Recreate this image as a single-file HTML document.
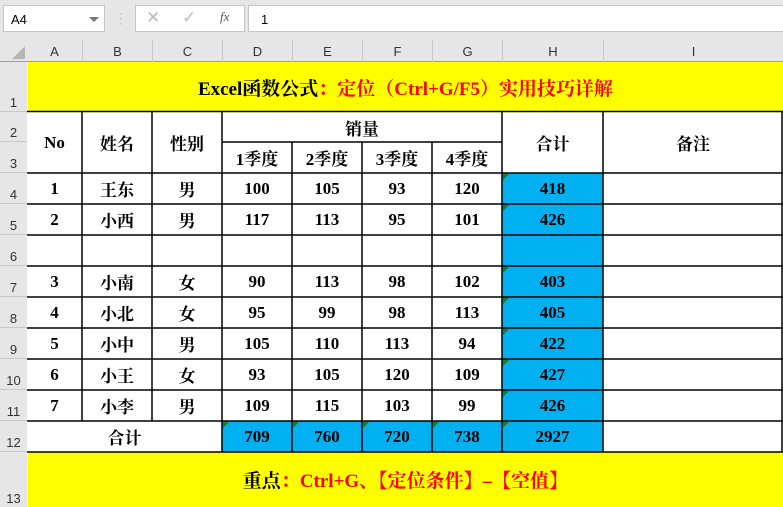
<!DOCTYPE html><html><head><meta charset="utf-8"><style>
*{margin:0;padding:0;box-sizing:border-box}
body{width:783px;height:507px;overflow:hidden;background:#fff;position:relative;font-family:"Liberation Serif","Noto Serif CJK SC",serif}
.a{position:absolute}
.c{position:absolute;display:flex;align-items:center;justify-content:center;font-weight:bold;font-size:17px;color:#000}
.hd{position:absolute;font-family:"Liberation Sans",sans-serif;font-size:13px;color:#333;display:flex;align-items:center;justify-content:center}
.rh{position:absolute;left:0;width:27px;font-family:"Liberation Sans",sans-serif;font-size:13px;color:#333;display:flex;align-items:flex-end;justify-content:center;background:#e6e6e6;border-bottom:1px solid #c8c8c8;padding-bottom:1px}
.b{background:#00b0f0}
.r{color:#f00}
.tri{position:absolute;width:0;height:0;border-top:6px solid #207a20;border-right:6px solid transparent}
</style></head><body>
<div class="a" style="left:0;top:0;width:783px;height:40px;background:#e6e6e6"></div>
<div class="a" style="left:3px;top:5px;width:102px;height:27px;background:#fff;border:1px solid #c6c6c6;font-family:'Liberation Sans',sans-serif;font-size:13px;padding:6px 0 0 7px">A4</div>
<div class="a" style="left:89px;top:17px;border-left:5px solid transparent;border-right:5px solid transparent;border-top:5px solid #777"></div>
<div class="a" style="left:119px;top:12px;color:#aaa;font-size:11px;line-height:5px;font-family:'Liberation Sans'">·<br>·<br>·</div>
<div class="a" style="left:135px;top:5px;width:110px;height:27px;background:#fff;border:1px solid #c6c6c6"></div>
<div class="a" style="left:146px;top:8px;color:#bbb;font-size:17px;font-family:'DejaVu Sans'">✕</div>
<div class="a" style="left:182px;top:8px;color:#bbb;font-size:17px;font-family:'DejaVu Sans'">✓</div>
<div class="a" style="left:220px;top:9px;color:#555;font-size:13px;font-style:italic">fx</div>
<div class="a" style="left:248px;top:5px;width:540px;height:27px;background:#fff;border:1px solid #c6c6c6;font-family:'Liberation Sans',sans-serif;font-size:13px;padding:6px 0 0 12px">1</div>
<div class="a" style="left:0;top:40px;width:783px;height:22px;background:#e6e6e6;border-bottom:1px solid #a0a0a0"></div>
<div class="a" style="left:12px;top:46px;border-left:13px solid transparent;border-bottom:13px solid #b5b5b5"></div>
<div class="hd" style="left:27px;top:40px;width:55px;height:22px">A</div>
<div class="hd" style="left:82px;top:40px;width:70px;height:22px;border-left:1px solid #c8c8c8">B</div>
<div class="hd" style="left:152px;top:40px;width:70px;height:22px;border-left:1px solid #c8c8c8">C</div>
<div class="hd" style="left:222px;top:40px;width:70px;height:22px;border-left:1px solid #c8c8c8">D</div>
<div class="hd" style="left:292px;top:40px;width:70px;height:22px;border-left:1px solid #c8c8c8">E</div>
<div class="hd" style="left:362px;top:40px;width:70px;height:22px;border-left:1px solid #c8c8c8">F</div>
<div class="hd" style="left:432px;top:40px;width:70px;height:22px;border-left:1px solid #c8c8c8">G</div>
<div class="hd" style="left:502px;top:40px;width:101px;height:22px;border-left:1px solid #c8c8c8">H</div>
<div class="hd" style="left:603px;top:40px;width:180px;height:22px;border-left:1px solid #c8c8c8">I</div>
<div class="a" style="left:0;top:62px;width:27px;height:445px;background:#e6e6e6;border-right:1px solid #a0a0a0"></div>
<div class="rh" style="top:62px;height:50px">1</div>
<div class="rh" style="top:112px;height:30px">2</div>
<div class="rh" style="top:142px;height:31px">3</div>
<div class="rh" style="top:173px;height:31px">4</div>
<div class="rh" style="top:204px;height:31px">5</div>
<div class="rh" style="top:235px;height:31px">6</div>
<div class="rh" style="top:266px;height:31px">7</div>
<div class="rh" style="top:297px;height:31px">8</div>
<div class="rh" style="top:328px;height:31px">9</div>
<div class="rh" style="top:359px;height:31px">10</div>
<div class="rh" style="top:390px;height:31px">11</div>
<div class="rh" style="top:421px;height:31px">12</div>
<div class="rh" style="top:452px;height:55px;border-bottom:none">13</div>
<div class="c" style="left:28px;top:62px;width:755px;height:50px;background:#ff0;font-size:19px">Excel函数公式<span class="r">：定位（Ctrl+G/F5）实用技巧详解</span></div>
<div class="c" style="left:28px;top:452px;width:755px;height:55px;background:#ff0;font-size:19px">重点<span class="r">：Ctrl+G、【定位条件】–【空值】</span></div>
<div class="a b" style="left:502px;top:173px;width:101px;height:248px"></div>
<div class="a b" style="left:222px;top:421px;width:381px;height:31px"></div>
<svg class="a" style="left:0;top:0" width="783" height="507"><g stroke="#000" stroke-width="1.5" fill="none">
<line x1="27" y1="111.5" x2="783" y2="111.5"/><line x1="27" y1="452" x2="783" y2="452"/>
<line x1="222" y1="142" x2="502" y2="142"/>
<line x1="27" y1="173" x2="783" y2="173"/>
<line x1="27" y1="204" x2="783" y2="204"/><line x1="27" y1="235" x2="783" y2="235"/><line x1="27" y1="266" x2="783" y2="266"/><line x1="27" y1="297" x2="783" y2="297"/><line x1="27" y1="328" x2="783" y2="328"/><line x1="27" y1="359" x2="783" y2="359"/><line x1="27" y1="390" x2="783" y2="390"/><line x1="27" y1="421" x2="783" y2="421"/>
<line x1="82" y1="112" x2="82" y2="421"/><line x1="152" y1="112" x2="152" y2="421"/><line x1="222" y1="112" x2="222" y2="452"/>
<line x1="292" y1="142" x2="292" y2="452"/><line x1="362" y1="142" x2="362" y2="452"/><line x1="432" y1="142" x2="432" y2="452"/>
<line x1="502" y1="112" x2="502" y2="452"/><line x1="603" y1="112" x2="603" y2="452"/><line x1="782" y1="112" x2="782" y2="452"/>
</g></svg>
<div class="c" style="left:27px;top:112px;width:55px;height:61px">No</div>
<div class="c" style="left:82px;top:112px;width:70px;height:61px">姓名</div>
<div class="c" style="left:152px;top:112px;width:70px;height:61px">性别</div>
<div class="c" style="left:222px;top:112px;width:280px;height:30px">销量</div>
<div class="c" style="left:222px;top:142px;width:70px;height:31px">1季度</div>
<div class="c" style="left:292px;top:142px;width:70px;height:31px">2季度</div>
<div class="c" style="left:362px;top:142px;width:70px;height:31px">3季度</div>
<div class="c" style="left:432px;top:142px;width:70px;height:31px">4季度</div>
<div class="c" style="left:502px;top:112px;width:101px;height:61px">合计</div>
<div class="c" style="left:603px;top:112px;width:180px;height:61px">备注</div>
<div class="c" style="left:27px;top:421px;width:195px;height:31px">合计</div>
<div class="c" style="left:222px;top:421px;width:70px;height:31px">709</div>
<div class="c" style="left:292px;top:421px;width:70px;height:31px">760</div>
<div class="c" style="left:362px;top:421px;width:70px;height:31px">720</div>
<div class="c" style="left:432px;top:421px;width:70px;height:31px">738</div>
<div class="c" style="left:502px;top:421px;width:101px;height:31px">2927</div>
<div class="tri" style="left:223px;top:422px"></div><div class="tri" style="left:293px;top:422px"></div><div class="tri" style="left:363px;top:422px"></div><div class="tri" style="left:433px;top:422px"></div><div class="tri" style="left:503px;top:422px"></div>
<div class="c" style="left:27px;top:173px;width:55px;height:31px">1</div><div class="c" style="left:82px;top:173px;width:70px;height:31px">王东</div><div class="c" style="left:152px;top:173px;width:70px;height:31px">男</div><div class="c" style="left:222px;top:173px;width:70px;height:31px">100</div><div class="c" style="left:292px;top:173px;width:70px;height:31px">105</div><div class="c" style="left:362px;top:173px;width:70px;height:31px">93</div><div class="c" style="left:432px;top:173px;width:70px;height:31px">120</div><div class="c" style="left:502px;top:173px;width:101px;height:31px">418</div><div class="tri" style="left:503px;top:174px"></div>
<div class="c" style="left:27px;top:204px;width:55px;height:31px">2</div><div class="c" style="left:82px;top:204px;width:70px;height:31px">小西</div><div class="c" style="left:152px;top:204px;width:70px;height:31px">男</div><div class="c" style="left:222px;top:204px;width:70px;height:31px">117</div><div class="c" style="left:292px;top:204px;width:70px;height:31px">113</div><div class="c" style="left:362px;top:204px;width:70px;height:31px">95</div><div class="c" style="left:432px;top:204px;width:70px;height:31px">101</div><div class="c" style="left:502px;top:204px;width:101px;height:31px">426</div><div class="tri" style="left:503px;top:205px"></div>
<div class="c" style="left:27px;top:266px;width:55px;height:31px">3</div><div class="c" style="left:82px;top:266px;width:70px;height:31px">小南</div><div class="c" style="left:152px;top:266px;width:70px;height:31px">女</div><div class="c" style="left:222px;top:266px;width:70px;height:31px">90</div><div class="c" style="left:292px;top:266px;width:70px;height:31px">113</div><div class="c" style="left:362px;top:266px;width:70px;height:31px">98</div><div class="c" style="left:432px;top:266px;width:70px;height:31px">102</div><div class="c" style="left:502px;top:266px;width:101px;height:31px">403</div><div class="tri" style="left:503px;top:267px"></div>
<div class="c" style="left:27px;top:297px;width:55px;height:31px">4</div><div class="c" style="left:82px;top:297px;width:70px;height:31px">小北</div><div class="c" style="left:152px;top:297px;width:70px;height:31px">女</div><div class="c" style="left:222px;top:297px;width:70px;height:31px">95</div><div class="c" style="left:292px;top:297px;width:70px;height:31px">99</div><div class="c" style="left:362px;top:297px;width:70px;height:31px">98</div><div class="c" style="left:432px;top:297px;width:70px;height:31px">113</div><div class="c" style="left:502px;top:297px;width:101px;height:31px">405</div><div class="tri" style="left:503px;top:298px"></div>
<div class="c" style="left:27px;top:328px;width:55px;height:31px">5</div><div class="c" style="left:82px;top:328px;width:70px;height:31px">小中</div><div class="c" style="left:152px;top:328px;width:70px;height:31px">男</div><div class="c" style="left:222px;top:328px;width:70px;height:31px">105</div><div class="c" style="left:292px;top:328px;width:70px;height:31px">110</div><div class="c" style="left:362px;top:328px;width:70px;height:31px">113</div><div class="c" style="left:432px;top:328px;width:70px;height:31px">94</div><div class="c" style="left:502px;top:328px;width:101px;height:31px">422</div><div class="tri" style="left:503px;top:329px"></div>
<div class="c" style="left:27px;top:359px;width:55px;height:31px">6</div><div class="c" style="left:82px;top:359px;width:70px;height:31px">小王</div><div class="c" style="left:152px;top:359px;width:70px;height:31px">女</div><div class="c" style="left:222px;top:359px;width:70px;height:31px">93</div><div class="c" style="left:292px;top:359px;width:70px;height:31px">105</div><div class="c" style="left:362px;top:359px;width:70px;height:31px">120</div><div class="c" style="left:432px;top:359px;width:70px;height:31px">109</div><div class="c" style="left:502px;top:359px;width:101px;height:31px">427</div><div class="tri" style="left:503px;top:360px"></div>
<div class="c" style="left:27px;top:390px;width:55px;height:31px">7</div><div class="c" style="left:82px;top:390px;width:70px;height:31px">小李</div><div class="c" style="left:152px;top:390px;width:70px;height:31px">男</div><div class="c" style="left:222px;top:390px;width:70px;height:31px">109</div><div class="c" style="left:292px;top:390px;width:70px;height:31px">115</div><div class="c" style="left:362px;top:390px;width:70px;height:31px">103</div><div class="c" style="left:432px;top:390px;width:70px;height:31px">99</div><div class="c" style="left:502px;top:390px;width:101px;height:31px">426</div><div class="tri" style="left:503px;top:391px"></div>
</body></html>
